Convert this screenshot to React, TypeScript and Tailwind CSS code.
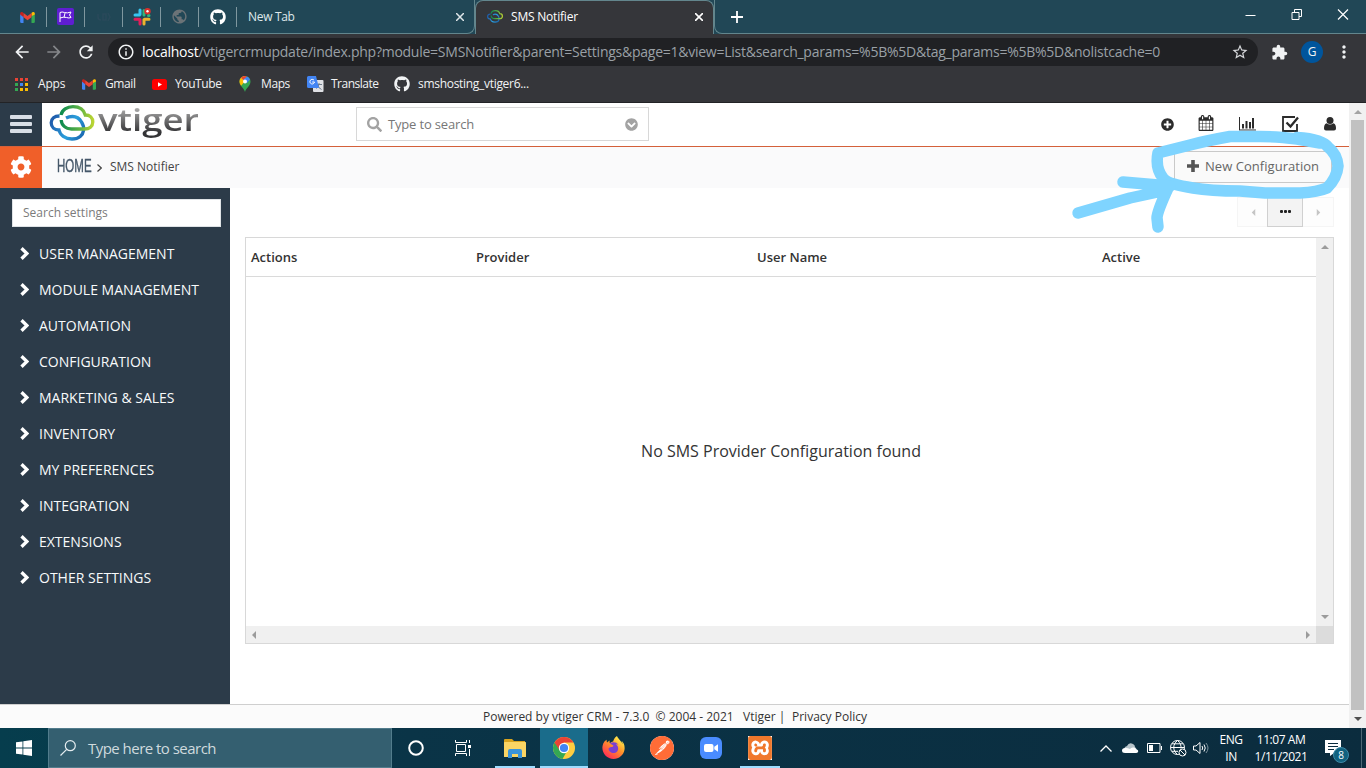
import React from "react";
import { FaGithub, FaPlusCircle, FaCog, FaSearch, FaChevronCircleDown } from "react-icons/fa";
import { SiPostman, SiXampp, SiFirefoxbrowser } from "react-icons/si";
import { MdArrowBack, MdArrowForward, MdRefresh, MdStarBorder, MdOutlineInfo, MdExtension, MdMoreVert, MdPublic } from "react-icons/md";

const Gmail = ({ className }: { className: string }) => (
  <svg viewBox="0 0 24 18" className={className}>
    <path d="M0 3v13a2 2 0 0 0 2 2h3.500V7z" fill="#4285f4" />
    <path d="M24 3v13a2 2 0 0 1-2 2h-3.500V7z" fill="#34a853" />
    <path d="M18.500 7V1.500L20 .5c2-1.300 4 0 4 2.300V4z" fill="#fbbc04" />
    <path d="M0 4V2.800C0 .5 2-.8 4 .5L5.500 1.500V8.500z" fill="#c5221f" />
    <path d="M5.500 8.500v-7L12 6.500l6.500-5v7L12 13.300z" fill="#ea4335" />
  </svg>
);

const Clouds = ({ className }: { className: string }) => (
  <svg viewBox="0 0 45 36" className={className} fill="none" strokeWidth="3.300">
    <defs>
      <linearGradient id="cg" x1="0" x2="1"><stop offset="0" stopColor="#0c8a50" /><stop offset="0.600" stopColor="#5fb345" /><stop offset="1" stopColor="#b9d433" /></linearGradient>
      <linearGradient id="cb" x1="0" y1="0.300" x2="1" y2="0.700"><stop offset="0" stopColor="#1f5fae" /><stop offset="0.600" stopColor="#2b9fdc" /><stop offset="1" stopColor="#1c6db5" /></linearGradient>
    </defs>
    <path d="M10 11C5 11 1.700 13.500 1.700 17.800c0 4.500 3.300 7.200 7.800 7.200 1 5 6 9 13 9s11-4 11.500-8.500c.4-3-.3-6-2-8.500-2-3.500-5-5.500-9-5.500-2.500 0-4.500.5-6.500 1.500" stroke="url(#cb)" />
    <path d="M11.500 10c1-5 6-8.300 12-8.300 6.500 0 11 3.300 12.300 8.300 4.700 0 7.500 3 7.500 7 0 4.300-3.500 7-8.300 7H22c-6 0-10-4-10.300-9" stroke="url(#cg)" />
  </svg>
);

const Slack = () => (
  <svg viewBox="0 0 18 18" className="size-[18px]" strokeWidth="3" strokeLinecap="round">
    <path d="M7 2v4.500M2 7h4.500" stroke="#36c5f0" />
    <path d="M11 2.500v4.500M16 7.500h-.5" stroke="#2eb67d" />
    <path d="M11 11.500V16M11.500 11.200H16" stroke="#ecb22e" />
    <path d="M7 11.500V16M2 11.200h4.500" stroke="#e01e5a" />
    <circle cx="14.500" cy="3.200" r="3.200" fill="#d9302c" stroke="none" />
    <circle cx="14.500" cy="3.200" r="1.200" fill="#fff" stroke="none" />
  </svg>
);

const appColors = ["fill-[#ea4335]", "fill-[#ea4335]", "fill-[#ea4335]", "fill-[#34a853]", "fill-[#4285f4]", "fill-[#fbbc04]", "fill-[#34a853]", "fill-[#fbbc04]", "fill-[#fbbc04]"];

const PinnedTab = ({ children }: { children?: React.ReactNode }) => (
  <div className="flex h-5 w-[38px] items-center justify-center border-r border-[#7f979f]">{children}</div>
);

function TabStrip() {
  return (
    <div className="flex h-[34px] bg-[#214756] text-xs text-white">
      <div className="flex h-full w-[475px] items-center rounded-br-lg border-b border-r border-[#63868d] pl-[9px]">
        <PinnedTab><Gmail className="mt-px h-[11px] w-[15px]" /></PinnedTab>
        <PinnedTab>
          <svg viewBox="0 0 17 17" className="size-[17px]"><rect width="17" height="17" rx="2" fill="#5f1ed2" /><path d="M3 14V4.500q2-1 4.500 0T14 4l-1.500 3L14 9.500q-2 1-4.500 0T3 10M8 5l-1 4.500" fill="none" stroke="#fff" /></svg>
        </PinnedTab>
        <PinnedTab>
          <svg viewBox="0 0 16 16" className="size-4" fill="none" stroke="#2a4a5b" strokeWidth="1.500"><path d="M2 5v3q0 3 3 3M7 5h3v6H7zM12 4l2 4-2 4" /></svg>
        </PinnedTab>
        <PinnedTab><Slack /></PinnedTab>
        <PinnedTab><MdPublic className="size-[17px] text-[#6b7377]" /></PinnedTab>
        <PinnedTab><FaGithub className="size-4" /></PinnedTab>
        <span className="ml-[11px] w-[205px] whitespace-nowrap font-['Open_Sans',sans-serif] tracking-[-0.32px] text-[#dfe8eb]">New Tab</span>
        <svg viewBox="0 0 8 8" className="mt-px ml-[3px] size-2" stroke="#dfe6e9" strokeWidth="1.500"><path d="M0 0l8 8M8 0L0 8" /></svg>
      </div>
      <div className="flex h-full w-[239px] items-center rounded-t-lg border border-b-0 border-[#63868d] bg-[#35363a] pb-0.5 pl-[11px]">
        <Clouds className="h-[15px] w-4" />
        <span className="ml-2 w-[184px] whitespace-nowrap font-['Open_Sans',sans-serif] tracking-[-0.2px]">SMS Notifier</span>
        <svg viewBox="0 0 8 8" className="mt-px size-2" stroke="#fff" strokeWidth="1.600"><path d="M0 0l8 8M8 0L0 8" /></svg>
      </div>
      <div className="flex h-full flex-1 items-center rounded-bl-lg border-b border-l border-[#63868d] pl-4">
        <svg viewBox="0 0 12 12" className="size-3" stroke="#fff" strokeWidth="1.800"><path d="M6 0v12M0 6h12" /></svg>
        <svg viewBox="0 0 104 12" className="mr-[17px] mb-[5px] ml-auto h-3 w-[104px]" fill="none" stroke="#fff">
          <path d="M.5 7.500h10" /><path d="M47 4.500h7v7h-7zM49.500 4.500v-3h7v7h-2.500" /><path d="M93 1.500l10 10M103 1.500l-10 10" strokeWidth="1.200" />
        </svg>
      </div>
    </div>
  );
}

function Toolbar() {
  return (
    <div className="flex h-9 items-center bg-[#35363a] pl-3 text-[#f1f3f4]">
      <MdArrowBack className="size-5" />
      <MdArrowForward className="ml-3 size-5 text-[#85878a]" />
      <MdRefresh className="ml-3 size-5" />
      <div className="ml-3 flex h-7 w-[1150px] items-center rounded-full bg-[#202124] pl-[9px]">
        <MdOutlineInfo className="size-[18px]" />
        <div className="ml-[7px] w-[1089px] whitespace-nowrap font-['Open_Sans',sans-serif] text-sm tracking-[-0.25px] text-[#9aa0a6]">
          <span className="text-white">localhost</span>/vtigercrmupdate/index.php?module=SMSNotifier&amp;parent=Settings&amp;page=1&amp;view=List&amp;search_params=%5B%5D&amp;tag_params=%5B%5D&amp;nolistcache=0
        </div>
        <MdStarBorder className="size-[18px] text-[#d5d7da]" />
      </div>
      <MdExtension className="ml-[13px] size-[17px]" />
      <div className="ml-[13px] flex size-[22px] items-center justify-center rounded-full bg-[#00559c] font-['Open_Sans',sans-serif] text-xs">G</div>
      <MdMoreVert className="ml-[11px] size-5" />
    </div>
  );
}

function Bookmarks() {
  return (
    <div className="flex h-[33px] items-center border-b border-[#222326] bg-[#35363a] pb-1 pl-[15px] font-['Open_Sans',sans-serif] text-xs tracking-[-0.2px] whitespace-nowrap text-[#f1f3f4]">
      <svg viewBox="0 0 13 13" className="size-[13px]">
        {appColors.map((c, i) => <rect key={i} x={(i % 3) * 5} y={Math.floor(i / 3) * 5} width="3" height="3" className={c} />)}
      </svg>
      <span className="ml-[10px] w-[34px]">Apps</span>
      <Gmail className="ml-[10px] h-[11px] w-[14px]" />
      <span className="ml-[9px] w-[38px] tracking-[-0.4px]">Gmail</span>
      <svg viewBox="0 0 15 11" className="ml-[9px] h-[11px] w-[15px]"><rect width="15" height="11" rx="2.500" fill="#f00" /><path d="M6 3.300v4.400l4-2.200z" fill="#fff" /></svg>
      <span className="ml-[8px] w-[54px] tracking-[-0.4px]">YouTube</span>
      <svg viewBox="0 0 12 16" className="ml-[10px] h-4 w-3">
        <path d="M6 16C5 12 .5 10 .5 5.500A5.500 5.500 0 0 1 11.500 5.500C11.500 10 7 12 6 16z" fill="#34a853" />
        <path d="M.5 5.500c0 1.700.7 3 1.600 4.200L8 3 6 0C3 0 .5 2.400.5 5.500z" fill="#fbbc04" />
        <path d="M.5 5.500C.5 4 1 2.700 2 1.800L4.500 4 8 .4 6 0A5.500 5.500 0 0 0 .5 5.500z" fill="#ea4335" />
        <path d="M8 .4L4 4l4 3 3-3.500A5.500 5.500 0 0 0 8 .4z" fill="#4285f4" /><circle cx="6" cy="5.400" r="2" fill="#fff" />
      </svg>
      <span className="ml-[10px] w-[36px] tracking-[-0.4px]">Maps</span>
      <svg viewBox="0 0 17 16" className="ml-[10px] h-4 w-[17px]">
        <rect x="6" y="4" width="10.500" height="12" rx="1" fill="#dfe1e5" /><path d="M9 8.500h6M12 7v1.500q-1 3-3 4M10.500 9q1 3 4 4.500" stroke="#6f7e8c" fill="none" />
        <path d="M1.500 0H9l3 12H1.500A1.500 1.500 0 0 1 0 10.500v-9A1.500 1.500 0 0 1 1.500 0z" fill="#4285f4" /><path d="M7 4.200a2.300 2.300 0 1 0 .5 1.800H5.200" stroke="#fff" fill="none" />
      </svg>
      <span className="ml-[7px] w-[54px] tracking-[-0.5px]">Translate</span>
      <FaGithub className="ml-[9px] size-4" />
      <span className="ml-[8px] tracking-[-0.3px]">smshosting_vtiger6...</span>
    </div>
  );
}

function TopBar() {
  return (
    <div className="flex h-11 border-b border-[#d4603a] bg-white">
      <div className="flex w-[42px] flex-col items-center justify-center gap-[3px] bg-[#2c3b49] pb-0.5">
        <div className="h-1 w-[22px] rounded-[1px] bg-[#d8dee6]" /><div className="h-1 w-[22px] rounded-[1px] bg-[#d8dee6]" /><div className="h-1 w-[22px] rounded-[1px] bg-[#d8dee6]" />
      </div>
      <Clouds className="mt-[2px] ml-[7px] h-[36px] w-[46px]" />
      <div className="ml-[3px] h-10 w-[101px]">
        <span className="block h-10 w-[82px] origin-left scale-x-[1.22] bg-linear-to-b from-[#a8a8a8] from-15% to-[#333335] to-75% bg-clip-text font-['Open_Sans',sans-serif] text-[30px] leading-[34px] font-semibold text-transparent">vtiger</span>
      </div>
      <div className="mt-1 ml-[157px] flex h-[34px] w-[293px] items-center border border-[#d8d8d8] pl-[10px]">
        <FaSearch className="size-[15px] text-[#a3a3a3]" />
        <span className="mt-0.5 ml-[6px] w-[237px] font-['Open_Sans',sans-serif] text-[13px] tracking-[-0.17px] text-[#777]">Type to search</span>
        <FaChevronCircleDown className="size-[13px] text-[#a3a3a3]" />
      </div>
      <div className="ml-auto flex h-[42px] items-center text-[#2b2b2b]">
        <FaPlusCircle className="size-[13px]" />
        <svg viewBox="0 0 1792 1792" className="mb-0.5 ml-[24px] size-[16px]" fill="currentColor"><path d="M192 1664h288v-288h-288v288zm352 0h320v-288h-320v288zm-352-352h288v-320h-288v320zm352 0h320v-320h-320v320zm-352-384h288v-288h-288v288zm736 736h320v-288h-320v288zm-384-736h320v-288h-320v288zm768 736h288v-288h-288v288zm-384-352h320v-320h-320v320zm-352-864v-288q0-13-9.500-22.500t-22.500-9.500h-64q-13 0-22.500 9.500t-9.500 22.500v288q0 13 9.500 22.500t22.500 9.500h64q13 0 22.500-9.500t9.500-22.500zm736 864h288v-320h-288v320zm-384-384h320v-288h-320v288zm384 0h288v-288h-288v288zm32-480v-288q0-13-9.500-22.500t-22.500-9.500h-64q-13 0-22.500 9.500t-9.500 22.500v288q0 13 9.500 22.500t22.500 9.500h64q13 0 22.500-9.500t9.500-22.500zm384-64v1280q0 52-38 90t-90 38h-1408q-52 0-90-38t-38-90v-1280q0-52 38-90t90-38h128v-96q0-66 47-113t113-47h64q66 0 113 47t47 113v96h384v-96q0-66 47-113t113-47h64q66 0 113 47t47 113v96h128q52 0 90 38t38 90z" /></svg>
        <svg viewBox="0 0 17 14" className="mb-px ml-[25px] h-[14px] w-[17px]" fill="currentColor"><path d="M0 0h1v12.500h16v1H0zM3 7h2v4.500H3zM6.500 4h2v7.500h-2zM10 5h2v6.500h-2zM13 1h2v10.500h-2z" /></svg>
        <svg viewBox="0 0 17 16" className="ml-[26px] h-4 w-[17px]" fill="none" stroke="currentColor"><path d="M13 1H1v14h14V8" strokeWidth="1.800" /><path d="M4.500 6.500l4 4 7.500-9" strokeWidth="2.300" /></svg>
        <svg viewBox="0 0 12 14" className="mr-[13px] mb-px ml-[25px] h-[14px] w-3" fill="currentColor"><circle cx="6" cy="3.600" r="3.500" /><path d="M2.500 6.200Q6 9 9.500 6.200C11.500 7 12 9 12 11.500q0 2-2 2H2q-2 0-2-2C0 9 .5 7 2.500 6.200z" /></svg>
      </div>
    </div>
  );
}

function Breadcrumb() {
  return (
    <div className="flex h-[41px] items-center bg-[#fafafb] font-['Open_Sans',sans-serif]">
      <div className="flex h-full w-[42px] items-center justify-center bg-[#f05f29] pb-0.5"><FaCog className="size-[22px] text-white" /></div>
      <div className="mb-[3px] ml-[15px] w-[36px]"><span className="block w-[52px] origin-left scale-x-[0.64] font-['Liberation_Sans',sans-serif] text-[18px] leading-5 text-[#46586a] [-webkit-text-stroke:0.4px_#46586a]">HOME</span></div>
      <svg viewBox="0 0 5 8" className="ml-[4px] h-2 w-[5px]" fill="none" stroke="#444" strokeWidth="1.200"><path d="M.5 .5L4.300 4 .5 7.500" /></svg>
      <span className="mb-0.5 ml-2 text-xs text-[#444]">SMS Notifier</span>
      <div className="mr-[17px] mb-0.5 ml-auto flex h-8 w-[158px] items-center rounded-[2px] border border-[#c9c9c9] bg-[#fafafa] pl-3 text-[#666]">
        <svg viewBox="0 0 12 12" className="mb-px size-3" fill="#555"><path d="M4.200 0h3.600v4.200H12v3.600H7.800V12H4.200V7.800H0V4.200h4.200z" /></svg>
        <span className="mt-px ml-[6px] text-[13px] tracking-[0.04px] whitespace-nowrap">New Configuration</span>
      </div>
    </div>
  );
}

const menu = ["USER MANAGEMENT", "MODULE MANAGEMENT", "AUTOMATION", "CONFIGURATION", "MARKETING & SALES", "INVENTORY", "MY PREFERENCES", "INTEGRATION", "EXTENSIONS", "OTHER SETTINGS"];

function Sidebar() {
  return (
    <div className="w-[230px] shrink-0 bg-[#2c3b49] pt-[11px] pl-3 font-['Open_Sans',sans-serif]">
      <div className="flex h-7 w-[209px] items-center border border-[#dfe3e6] bg-white pl-[10px] text-xs text-[#7b7b7b]">Search settings</div>
      <div className="mt-[9px]">
        {menu.map((m) => (
          <div key={m} className="flex h-9 items-center pl-[8px] text-sm whitespace-nowrap text-[#f8fafb]">
            <svg viewBox="0 0 9 13" className="mb-px h-[13px] w-[9px]" fill="none" stroke="#fff" strokeWidth="3.300"><path d="M1.500 1.300L6.900 6.500 1.500 11.700" /></svg>
            <span className="ml-[10px]">{m}</span>
          </div>
        ))}
      </div>
    </div>
  );
}

const Tri = ({ dir, className }: { dir: "up" | "down" | "left" | "right"; className: string }) => {
  const d = { up: "M0 6L4 2l4 4z", down: "M0 2l4 4 4-4z", left: "M6 0L2 4l4 4z", right: "M2 0l4 4-4 4z" }[dir];
  return <svg viewBox="0 0 8 8" className={className}><path d={d} /></svg>;
};

function Listing() {
  return (
    <div className="flex-1 bg-white pl-[15px] font-['Open_Sans',sans-serif]">
      <div className="mt-[9px] mr-[15px] ml-auto flex h-[30px] w-[97px]">
        <div className="flex w-[30px] items-center justify-center border border-r-0 border-[#f5f5f5] bg-[#fdfdfd] pl-0.5"><Tri dir="left" className="size-[7px] fill-[#c5c5c5]" /></div>
        <div className="flex w-[36px] items-center justify-center gap-px border border-[#d0d0d0] bg-[#f3f3f3] pb-px">
          <i className="size-[3px] rounded-[1px] bg-[#222]" /><i className="size-[3px] rounded-[1px] bg-[#222]" /><i className="size-[3px] rounded-[1px] bg-[#222]" />
        </div>
        <div className="flex w-[31px] items-center justify-center border border-l-0 border-[#f5f5f5] bg-[#fdfdfd]"><Tri dir="right" className="size-[7px] fill-[#c5c5c5]" /></div>
      </div>
      <div className="mt-[10px] grid h-[407px] w-[1089px] grid-cols-[1070px_17px] grid-rows-[388px_17px] border border-[#d8d8d8]">
        <div className="flex flex-col">
          <div className="flex h-[39px] items-center border-b border-[#dadada] pt-[2px] pl-[5px] text-[13px] font-semibold text-[#333]">
            <span className="w-[225px]">Actions</span><span className="w-[281px]">Provider</span><span className="w-[345px]">User Name</span><span>Active</span>
          </div>
          <div className="flex flex-1 items-center justify-center pb-0.5 text-base text-[#333]">No SMS Provider Configuration found</div>
        </div>
        <div className="flex flex-col items-center justify-between bg-[#f0f0f0] py-[5px]"><Tri dir="up" className="size-2 fill-[#9b9b9b]" /><Tri dir="down" className="size-2 fill-[#9b9b9b]" /></div>
        <div className="flex items-center justify-between bg-[#f0f0f0] px-1"><Tri dir="left" className="size-2 fill-[#9b9b9b]" /><Tri dir="right" className="size-2 fill-[#9b9b9b]" /></div>
        <div className="bg-[#dcdcdc]" />
      </div>
    </div>
  );
}

const Item = ({ children, className }: { children: React.ReactNode; className: string }) => (
  <div className={"flex h-full shrink-0 items-center justify-center " + className}>{children}</div>
);

function Taskbar() {
  return (
    <div className="flex h-10 items-center bg-linear-to-r from-[#063d4d] from-0% via-[#0a3447] via-30% to-[#0b2c3e] font-['Open_Sans',sans-serif] text-white">
      <Item className="w-12"><svg viewBox="0 0 16 16" className="size-4" fill="#fff"><path d="M0 2.300L6.500 1.400V7.600H0zM7.300 1.300L16 0v7.600H7.300zM0 8.400h6.500v6.200L0 13.700zM7.300 8.400H16V16l-8.700-1.300z" /></svg></Item>
      <div className="flex h-full w-[344px] shrink-0 items-center border border-[#527c8c] bg-[#345f70] pl-[11px]">
        <svg viewBox="0 0 16 16" className="size-4" fill="none" stroke="#e5edf0" strokeWidth="1.200"><circle cx="10.300" cy="5.700" r="5" /><path d="M6.700 9.300L.5 15.500" /></svg>
        <span className="ml-3 text-[15px] tracking-[-0.53px] text-[#cfdade]">Type here to search</span>
      </div>
      <Item className="w-12"><svg viewBox="0 0 16 16" className="size-4"><circle cx="8" cy="8" r="6.800" fill="none" stroke="#fff" strokeWidth="2" /></svg></Item>
      <Item className="w-[50px]"><svg viewBox="0 0 17 16" className="ml-[-3px] h-4 w-[17px]" fill="none" stroke="#fff"><path d="M.5 0v2.500h11V0M.5 16v-2.500h11V16M1.500 4.500h9v7h-9zM14.500 0v3M14.500 9v7" /><path d="M13 5h3v3h-3z" fill="#fff" stroke="none" /></svg></Item>
      <Item className="ml-[5px] w-10 border-b-2 border-[#9edcff]"><svg viewBox="0 0 22 19" className="mt-0.5 h-[19px] w-[22px]"><path d="M0 1q0-1 1-1h7l2 2h11v5H0z" fill="#d9a41f" /><rect y="3" width="22" height="15" rx=".5" fill="#fbd564" /><path d="M4 19v-7q0-2 2-2h10q2 0 2 2v7h-4v-4H8v4z" fill="#3b94d9" /></svg></Item>
      <Item className="ml-[5px] w-12 border-b-2 border-[#9edcff] bg-[#1a6c8b]">
        <svg viewBox="0 0 22 22" className="mt-0.5 size-[22px]"><circle cx="11" cy="11" r="11" fill="#ffcd40" /><path d="M11 11L1.500 5.500A11 11 0 0 0 9.500 21.900L14 14z" fill="#34a853" /><path d="M1.500 5.500A11 11 0 0 1 20.500 5.500H11L6.500 13z" fill="#ea4335" /><circle cx="11" cy="11" r="5.200" fill="#fff" /><circle cx="11" cy="11" r="4.100" fill="#4285f4" /></svg>
      </Item>
      <Item className="w-[50px]">
        <svg viewBox="0 0 24 24" className="mb-0.5 size-[23px]">
          <defs><linearGradient id="ff" gradientUnits="userSpaceOnUse" x1="20" y1="2" x2="5" y2="22"><stop offset="0" stopColor="#fff44f" /><stop offset="0.450" stopColor="#ff9429" /><stop offset="1" stopColor="#ff2d55" /></linearGradient></defs>
          <circle cx="12" cy="13" r="7" fill="#7a3fd0" />
          <SiFirefoxbrowser size={24} style={{ fill: "url(#ff)" }} />
        </svg>
      </Item>
      <Item className="w-12"><div className="rounded-full bg-white"><SiPostman className="size-6 text-[#ff6c37]" /></div></Item>
      <Item className="w-[50px]"><svg viewBox="0 0 22 22" className="size-[22px]"><rect width="22" height="22" rx="6" fill="#4a8cff" /><rect x="4" y="7" width="9.500" height="8" rx="2" fill="#fff" /><path d="M14.300 9.800L18 7.200v7.600l-3.700-2.600z" fill="#fff" /></svg></Item>
      <Item className="ml-[4px] w-10 border-b-2 border-[#9edcff]"><div className="mt-0.5 bg-white"><SiXampp className="size-6 text-[#f0782c]" /></div></Item>
      <div className="ml-auto flex h-full items-center">
        <svg viewBox="0 0 12 7" className="h-[7px] w-3" fill="none" stroke="#fff" strokeWidth="1.300"><path d="M.5 6.500L6 1l5.500 5.500" /></svg>
        <svg viewBox="0 0 17 10" className="ml-[10px] h-[10px] w-[17px]"><path d="M3 8Q1 4 5 3q2-4 6-2 2 1 2 3l3 4z" fill="#b8c5cb" /><path d="M3 10Q0 10 0 7.500T3 5q2-.5 5 1 1-2 4-1.500 2 .5 2 2 3 .5 2 2.500-.5 1-2 1z" fill="#fff" /></svg>
        <svg viewBox="0 0 15 10" className="ml-2 h-[10px] w-[15px]" fill="none" stroke="#fff"><path d="M.5 .5h12.500v9H.5z" /><path d="M2 2h4v6H2zM14 3h1v4h-1z" fill="#fff" stroke="none" /></svg>
        <svg viewBox="0 0 17 17" className="ml-[8px] size-[17px]" fill="none" stroke="#fff"><circle cx="7.500" cy="7.500" r="7" /><path d="M.5 7.500h14M2 3.800h11M2 11.300h6M7.500 .5c-5 4-5 10 0 14M7.500 .5c3 2.500 3.700 5 3.500 8" /><circle cx="12.500" cy="12.500" r="3.500" fill="#0b2c3e" /><path d="M10 10l5 5" /></svg>
        <svg viewBox="0 0 17 14" className="ml-[6px] h-[14px] w-[17px]" fill="none" stroke="#fff"><path d="M.5 5v4h2.500l4 3.500v-11L3 5zM9 5q1.500 2 0 4M11 3.500q2.500 3.500 0 7" /><path d="M13 2q4 5 0 10" stroke="#7d929d" /></svg>
        <div className="ml-[7px] w-7 text-center text-xs leading-[17px] tracking-[-0.5px]">ENG<br />IN</div>
        <div className="ml-[7px] w-[58px] text-center text-xs leading-[17px] tracking-[-0.45px] whitespace-nowrap">11:07 AM<br />1/11/2021</div>
        <div className="relative mr-[12px] ml-[15px] h-6 w-6">
          <svg viewBox="0 0 16 16" className="mt-1 size-4"><path d="M0 0h16v13H9l-4 3v-3H0z" fill="#fff" /><path d="M3 3.500h10M3 6.500h10M3 9.500h6" stroke="#0b2c3e" /></svg>
          <div className="absolute top-[11px] left-[8px] flex size-4 items-center justify-center rounded-full border border-[#3e8aa8] bg-[#11627f] text-[10px]">8</div>
        </div>
      </div>
      <div className="h-full w-px bg-[#4c6875]" /><div className="w-1" />
    </div>
  );
}

export default function App() {
  return (
    <div className="relative flex h-[768px] w-[1366px] flex-col overflow-hidden bg-white">
      <TabStrip />
      <Toolbar />
      <Bookmarks />
      <div className="flex h-[625px]">
        <div className="flex w-[1349px] flex-col">
          <TopBar />
          <Breadcrumb />
          <div className="flex h-[516px]"><Sidebar /><Listing /></div>
          <div className="flex h-6 items-center border-t border-[#cfcfcf] bg-[#fbfbfb] pl-[483px] font-['Open_Sans',sans-serif] text-xs whitespace-pre text-[#333]">
            <span className="w-[260px]">{"Powered by vtiger CRM - 7.3.0  © 2004 - 2021"}</span><span className="w-[49px]">Vtiger |</span><span>Privacy Policy</span>
          </div>
        </div>
        <div className="flex w-[17px] flex-col items-center bg-[#f1f1f1] py-[5px]">
          <Tri dir="up" className="size-2 fill-[#a3a3a3]" />
          <div className="mt-1 mb-[5px] w-[13px] flex-1 bg-[#c1c1c1]" />
          <Tri dir="down" className="size-2 fill-[#505050]" />
        </div>
      </div>
      <Taskbar />
      <svg viewBox="0 0 300 110" className="pointer-events-none absolute top-[128px] left-[1060px] h-[110px] w-[300px]" fill="none" stroke="#7fd4ff" strokeWidth="11.500" strokeLinecap="round" strokeLinejoin="round">
        <path d="M260 15L237 11Q215 8.500 200 8.500H170Q145 13 130 17L98 25Q95 40 103 50Q107 56 133 60Q150 63 180 63L205 65H240Q258 64 267 60Q277 50 278 38Q277 26 268 19Q262 11 237 9.500" />
        <path d="M18 85L70 70L107 62M63 54L110 58M108 60Q97 84 97 90L98 99" />
      </svg>
    </div>
  );
}
